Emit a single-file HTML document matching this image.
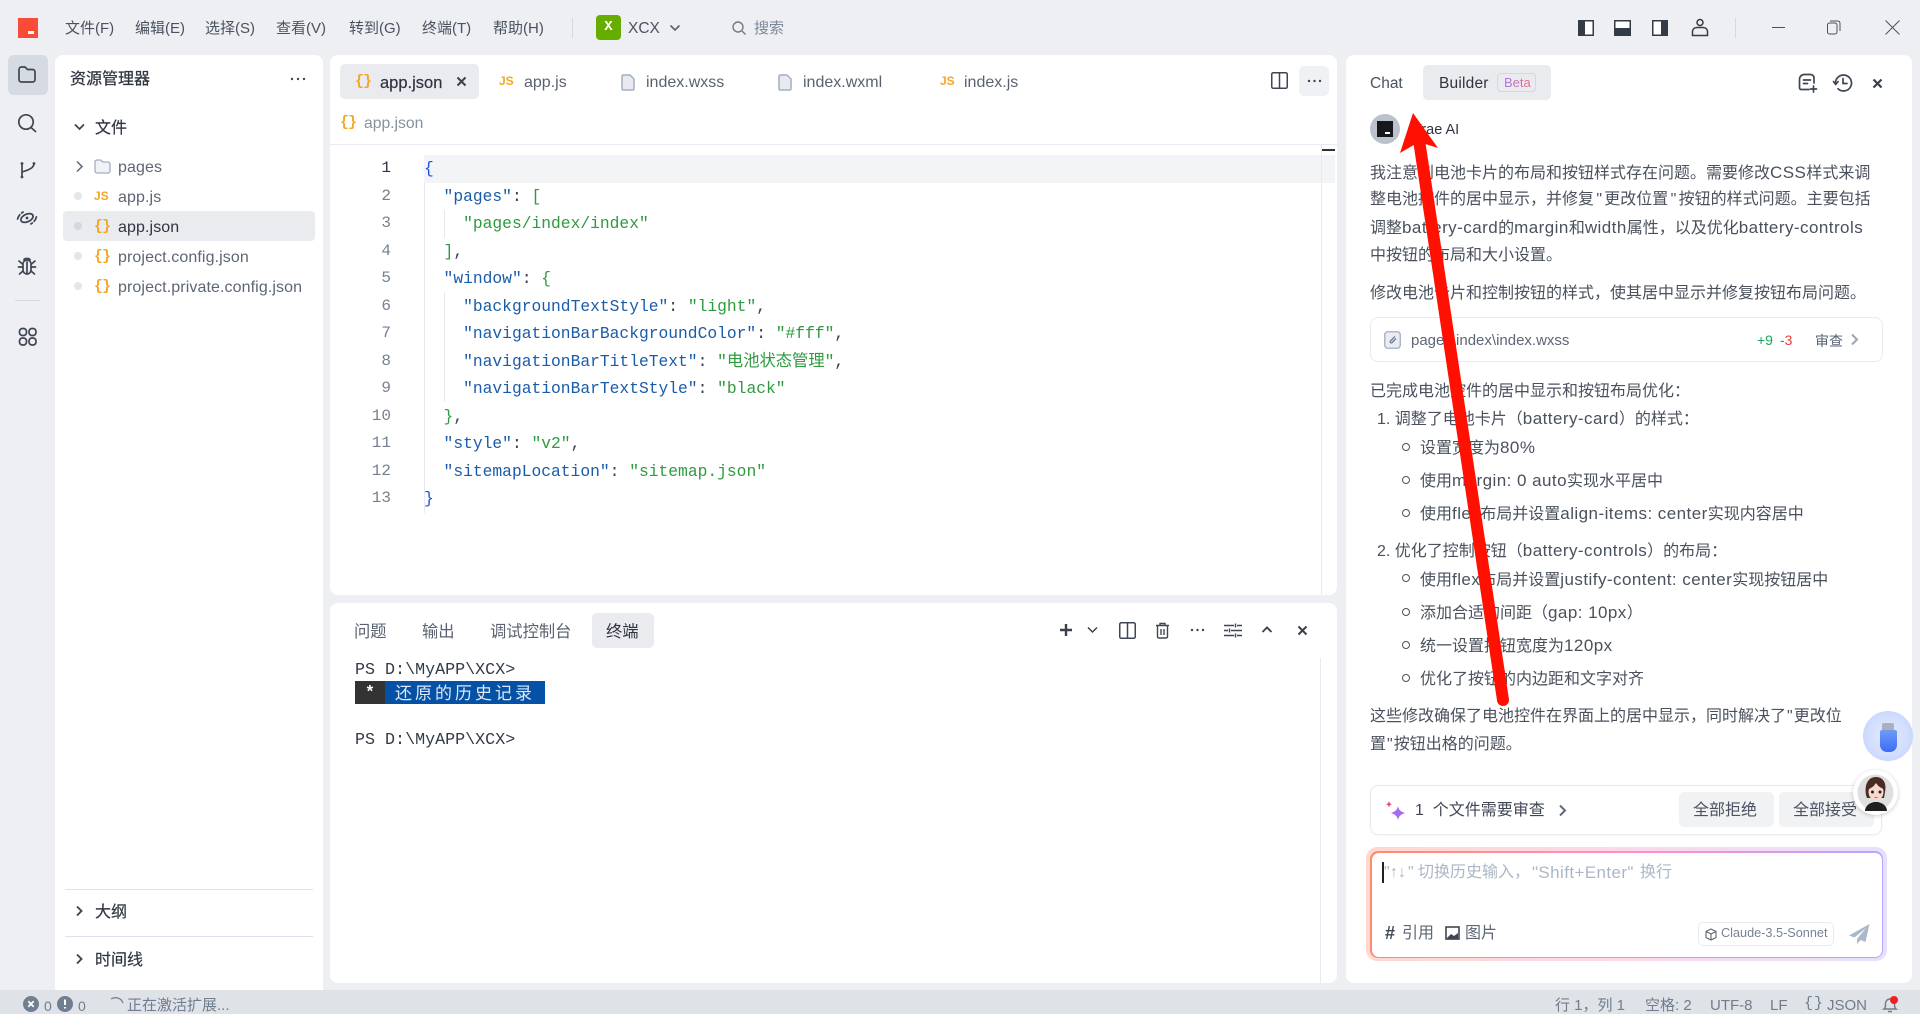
<!DOCTYPE html>
<html lang="zh"><head><meta charset="utf-8"><title>Trae</title>
<style>
html,body{margin:0;padding:0;width:1920px;height:1014px;overflow:hidden;background:#edeff3}
body{position:relative;font-family:"Liberation Sans","Noto Sans CJK SC",sans-serif;color:#3f4653;font-size:15px}
.t{position:absolute;white-space:pre;line-height:20px;height:20px;margin-top:1px}
.b{position:absolute;box-sizing:border-box}
svg{position:absolute;overflow:visible}
.m{top:18px;color:#4a5260;font-size:15px}
.code{position:absolute;left:424px;font:16.3px/27.5px "Liberation Mono","Noto Sans CJK SC",monospace;white-space:pre;height:27.5px;color:#39414d}
.n{position:absolute;left:360px;width:31px;text-align:right;font:16px/27.5px "Liberation Mono",monospace;color:#76818f;height:27.5px}
.k{color:#1b5ca8}.s{color:#2f9a40}.g{color:#2f9a40}.bl{color:#1f4fe0}
.j{position:absolute;font:bold 15px/20px "Liberation Mono",monospace;color:#f5a623;white-space:pre;height:20px;letter-spacing:-1px;margin-top:1px}
.js{position:absolute;font:bold 12px/20px "Liberation Sans",sans-serif;color:#f5a623;height:20px}
.tree{color:#5d6674;font-size:16px;letter-spacing:.1px}
.dot{position:absolute;left:74px;width:8px;height:8px;border-radius:50%;background:#e3e6eb}
.p{color:#4a515d;font-size:16px}
.l{font-size:17px;letter-spacing:.45px}
.q{padding:0 2.300px}
.r{position:absolute;left:1402px;width:6px;height:6px;border:1.5px solid #4a515d;border-radius:50%;box-sizing:content-box;margin-top:-1px}
.st{top:994px;color:#6f7d8e;font-size:15px}
.g2{fill:none;stroke:#3f4653;stroke-width:1.7;stroke-linecap:round;stroke-linejoin:round}
.file{fill:#e7eaf0;stroke:#a3aec2;stroke-width:1.5;stroke-linejoin:round}
.tb{font-size:16px;color:#5a6270;top:72px}
.tm{top:621px;font-size:16.300px;color:#5a6270}
</style></head><body>

<!-- title bar -->
<div class="b" style="left:18px;top:18px;width:20px;height:20px;background:#fa4b38"></div>
<div class="b" style="left:28px;top:31px;width:6px;height:3px;background:#fff"></div>
<div class="t m" style="left:65px">文件(F)</div>
<div class="t m" style="left:135px">编辑(E)</div>
<div class="t m" style="left:205px">选择(S)</div>
<div class="t m" style="left:276px">查看(V)</div>
<div class="t m" style="left:349px">转到(G)</div>
<div class="t m" style="left:422px">终端(T)</div>
<div class="t m" style="left:493px">帮助(H)</div>
<div class="b" style="left:572px;top:18px;width:1px;height:20px;background:#d5d9df"></div>
<div class="b" style="left:596px;top:15px;width:25px;height:25px;border-radius:4px;background:#67ad00;color:#fff;font:bold 14px/25px 'Liberation Mono',monospace;text-align:center">X</div>
<div class="t m" style="left:628px;font-size:15.500px">XCX</div>
<svg style="left:669px;top:23px" width="12" height="10"><path d="M1.5 2.5 6 7l4.500-4.500" fill="none" stroke="#596270" stroke-width="1.600"/></svg>
<svg style="left:731px;top:20px" width="16" height="16"><circle cx="7" cy="7" r="5" fill="none" stroke="#6f7a89" stroke-width="1.400"/><path d="M11 11l3.500 3.500" stroke="#6f7a89" stroke-width="1.400"/></svg>
<div class="t m" style="left:754px;color:#7c8796">搜索</div>
<svg style="left:1578px;top:20px" width="16" height="16"><rect x=".75" y=".75" width="14.500" height="14.500" fill="#fff" stroke="#333b47" stroke-width="1.500"/><rect x="1" y="1" width="6" height="14" fill="#333b47"/></svg>
<svg style="left:1614px;top:20px" width="17" height="16"><rect x=".75" y=".75" width="15.500" height="14.500" fill="#fff" stroke="#333b47" stroke-width="1.500"/><rect x="1" y="8" width="15" height="7" fill="#333b47"/></svg>
<svg style="left:1652px;top:20px" width="16" height="16"><rect x=".75" y=".75" width="14.500" height="14.500" fill="#fff" stroke="#333b47" stroke-width="1.500"/><rect x="9" y="1" width="6" height="14" fill="#333b47"/></svg>
<svg style="left:1691px;top:18px" width="18" height="19"><circle cx="9" cy="4.500" r="3" fill="none" stroke="#333b47" stroke-width="1.500"/><path d="M1.500 17.500v-3.500c0-3 2-4.500 4.500-4.500h6c2.500 0 4.500 1.500 4.500 4.500v3.500z" fill="none" stroke="#333b47" stroke-width="1.500"/></svg>
<div class="b" style="left:1735px;top:18px;width:1px;height:20px;background:#d5d9df"></div>
<div class="b" style="left:1772px;top:27px;width:13px;height:1px;background:#4a5260"></div>
<svg style="left:1827px;top:20px" width="14" height="15"><rect x=".5" y="3" width="9.500" height="11" rx="2" fill="none" stroke="#4a5260"/><path d="M3 1h7.500c1.500 0 2.500 1 2.500 2.500V11" fill="none" stroke="#4a5260"/></svg>
<svg style="left:1885px;top:20px" width="15" height="15"><path d="M.5.500l14 14M14.500.500l-14 14" stroke="#4a5260" stroke-width="1"/></svg>

<!-- activity bar -->
<div class="b" style="left:8px;top:55px;width:40px;height:40px;border-radius:6px;background:#d5dae3"></div>
<svg style="left:18px;top:66px" width="18" height="17"><path d="M1 3.500C1 2 2 1 3.500 1h3.500l2.500 2.500h5C16 3.500 17 4.500 17 6v7.500c0 1.500-1 2.500-2.500 2.500h-11C2 16 1 15 1 13.500z" class="g2"/></svg>
<svg style="left:17px;top:113px" width="20" height="20"><circle cx="9" cy="9" r="7.200" class="g2"/><path d="M14 14.500l4.500 4" class="g2"/></svg>
<svg style="left:19px;top:161px" width="18" height="19"><circle cx="3" cy="2.500" r="1.400" fill="#3f4653"/><circle cx="3" cy="16" r="1.400" fill="#3f4653"/><circle cx="15" cy="2.500" r="1.400" fill="#3f4653"/><path d="M3 2.500v13.500M15 2.500c0 4-4 6-12 8.500" class="g2"/></svg>
<svg style="left:17px;top:208px" width="20" height="20"><g transform="rotate(-25 10 10)"><ellipse cx="10" cy="10" rx="6.500" ry="3.800" class="g2" stroke-width="1.400"/><circle cx="10" cy="10" r="1.400" fill="#3f4653"/><path d="M1 7C3 4.500 6 3 9 3M19 13c-2 2.500-5 4-8 4" class="g2" stroke-dasharray="5 2.500"/></g></svg>
<svg style="left:18px;top:256px" width="18" height="20"><rect x="5" y="4" width="8" height="14" rx="4" class="g2"/><path d="M9 6v12M6 4c0-2 6-2 6 0M1 5l3.500 3M17 5l-3.500 3M.5 11h4M17.500 11h-4M1.500 18l3.500-3M16.500 18L13 15" class="g2"/></svg>
<div class="b" style="left:15px;top:300px;width:25px;height:1px;background:#d5d9e4"></div>
<svg style="left:18px;top:327px" width="19" height="19"><rect x="1.500" y="1.500" width="7" height="7" rx="3" class="g2"/><rect x="11" y="1.500" width="7" height="7" rx="3" class="g2"/><rect x="1.500" y="11" width="7" height="7" rx="3" class="g2"/><rect x="11" y="11" width="7" height="7" rx="3" class="g2"/></svg>

<!-- explorer panel -->
<div class="b" style="left:55px;top:55px;width:268px;height:935px;background:#fff;border-radius:8px 8px 0 0"></div>
<div class="t" style="left:70px;top:69px;font-size:16px;color:#2f3540;-webkit-text-stroke:.25px #2f3540">资源管理器</div>
<svg style="left:290px;top:77px" width="16" height="4"><circle cx="2" cy="2" r="1.200" fill="#3f4653"/><circle cx="8" cy="2" r="1.200" fill="#3f4653"/><circle cx="14" cy="2" r="1.200" fill="#3f4653"/></svg>
<svg style="left:74px;top:122px" width="11" height="10"><path d="M1 2.500l4.500 4.500L10 2.500" fill="none" stroke="#3f4653" stroke-width="1.800"/></svg>
<div class="t" style="left:95px;top:118px;font-size:16px;color:#2f3540;-webkit-text-stroke:.25px #2f3540">文件</div>
<svg style="left:75px;top:160px" width="9" height="13"><path d="M2 1.500l5 5-5 5" fill="none" stroke="#5d6674" stroke-width="1.500"/></svg>
<svg style="left:94px;top:159px" width="17" height="15"><path d="M1 3c0-1 1-2 2-2h3.500L9 3h5c1 0 2 1 2 2v7c0 1-1 2-2 2H3c-1 0-2-1-2-2z" fill="#f0f2f6" stroke="#a3aec2" stroke-width="1.300"/></svg>
<div class="t tree" style="left:118px;top:157px">pages</div>
<div class="dot" style="top:192px"></div>
<div class="js" style="left:94px;top:186px">JS</div>
<div class="t tree" style="left:118px;top:187px">app.js</div>
<div class="b" style="left:63px;top:211px;width:252px;height:30px;background:#e9ebef;border-radius:4px"></div>
<div class="dot" style="top:222px;background:#d3d7df"></div>
<div class="j" style="left:94px;top:216px">{}</div>
<div class="t tree" style="left:118px;top:217px;color:#2f3540">app.json</div>
<div class="dot" style="top:252px"></div>
<div class="j" style="left:94px;top:246px">{}</div>
<div class="t tree" style="left:118px;top:247px">project.config.json</div>
<div class="dot" style="top:282px"></div>
<div class="j" style="left:94px;top:276px">{}</div>
<div class="t tree" style="left:118px;top:277px">project.private.config.json</div>
<div class="b" style="left:65px;top:889px;width:248px;height:1px;background:#dfe2ec"></div>
<div class="b" style="left:65px;top:936px;width:248px;height:1px;background:#dfe2ec"></div>
<svg style="left:75px;top:905px" width="9" height="12"><path d="M2 1.500l4.500 4.500L2 10.500" fill="none" stroke="#3f4653" stroke-width="1.900"/></svg>
<div class="t" style="left:95px;top:902px;font-size:16px;color:#2f3540;-webkit-text-stroke:.2px #2f3540">大纲</div>
<svg style="left:75px;top:953px" width="9" height="12"><path d="M2 1.500l4.500 4.500L2 10.500" fill="none" stroke="#3f4653" stroke-width="1.900"/></svg>
<div class="t" style="left:95px;top:950px;font-size:16px;color:#2f3540;-webkit-text-stroke:.2px #2f3540">时间线</div>

<!-- editor panel -->
<div class="b" style="left:330px;top:55px;width:1007px;height:540px;background:#fff;border-radius:8px"></div>
<div class="b" style="left:340px;top:64px;width:139px;height:35px;background:#e9ebef;border-radius:5px"></div>
<div class="j" style="left:355px;top:71px">{}</div>
<div class="t" style="left:380px;top:72px;font-size:16.500px;color:#2f3540;-webkit-text-stroke:.2px #2f3540">app.json</div>
<svg style="left:456px;top:76px" width="11" height="11"><path d="M1.500 1.500l8 8M9.500 1.500l-8 8" stroke="#3a414d" stroke-width="2"/></svg>
<div class="js" style="left:499px;top:71px">JS</div>
<div class="t tb" style="left:524px">app.js</div>
<svg style="left:621px;top:74px" width="14" height="17"><path d="M1 2.500C1 1.500 1.700 1 2.500 1H9l4 4v9.500c0 1-.7 1.500-1.500 1.500h-9C1.700 16 1 15.500 1 14.500z" class="file"/></svg>
<div class="t tb" style="left:646px">index.wxss</div>
<svg style="left:778px;top:74px" width="14" height="17"><path d="M1 2.500C1 1.500 1.700 1 2.500 1H9l4 4v9.500c0 1-.7 1.500-1.500 1.500h-9C1.700 16 1 15.500 1 14.500z" class="file"/></svg>
<div class="t tb" style="left:803px">index.wxml</div>
<div class="js" style="left:940px;top:71px">JS</div>
<div class="t tb" style="left:964px">index.js</div>
<svg style="left:1271px;top:72px" width="17" height="17"><rect x=".75" y=".75" width="15.500" height="15.500" rx="1.500" fill="none" stroke="#3f4653" stroke-width="1.500"/><path d="M8.500 1v15" stroke="#3f4653" stroke-width="1.500"/></svg>
<div class="b" style="left:1299px;top:66px;width:30px;height:30px;background:#f0f1f4;border-radius:5px"></div>
<svg style="left:1307px;top:79px" width="15" height="4"><circle cx="2" cy="2" r="1.200" fill="#3f4653"/><circle cx="7.500" cy="2" r="1.200" fill="#3f4653"/><circle cx="13" cy="2" r="1.200" fill="#3f4653"/></svg>
<div class="j" style="left:340px;top:112px">{}</div>
<div class="t" style="left:364px;top:113px;color:#87929f;font-size:15.700px">app.json</div>
<div class="b" style="left:330px;top:144px;width:1007px;height:1px;background:#e7eaf2"></div>
<div class="b" style="left:424px;top:155px;width:911px;height:28px;background:#f3f4f6"></div>
<div class="b" style="left:1321px;top:145px;width:1px;height:450px;background:#e7eaf2"></div>
<div class="b" style="left:1322px;top:149px;width:13px;height:2px;background:#333"></div>
<div class="b" style="left:424px;top:183px;width:1px;height:330px;background:#e7e9ee"></div>
<div class="b" style="left:444px;top:210px;width:1px;height:28px;background:#e7e9ee"></div>
<div class="b" style="left:444px;top:292px;width:1px;height:110px;background:#e7e9ee"></div>

<div class="n" style="top:155px;color:#2f3540">1</div><div class="code" style="top:155px"><span class="bl">{</span></div>
<div class="n" style="top:182.500px">2</div><div class="code" style="top:182.500px">  <span class="k">"pages"</span>: <span class="g">[</span></div>
<div class="n" style="top:210px">3</div><div class="code" style="top:210px">    <span class="s">"pages/index/index"</span></div>
<div class="n" style="top:237.500px">4</div><div class="code" style="top:237.500px">  <span class="g">]</span>,</div>
<div class="n" style="top:265px">5</div><div class="code" style="top:265px">  <span class="k">"window"</span>: <span class="g">{</span></div>
<div class="n" style="top:292.500px">6</div><div class="code" style="top:292.500px">    <span class="k">"backgroundTextStyle"</span>: <span class="s">"light"</span>,</div>
<div class="n" style="top:320px">7</div><div class="code" style="top:320px">    <span class="k">"navigationBarBackgroundColor"</span>: <span class="s">"#fff"</span>,</div>
<div class="n" style="top:347.500px">8</div><div class="code" style="top:347.500px">    <span class="k">"navigationBarTitleText"</span>: <span class="s">"电池状态管理"</span>,</div>
<div class="n" style="top:375px">9</div><div class="code" style="top:375px">    <span class="k">"navigationBarTextStyle"</span>: <span class="s">"black"</span></div>
<div class="n" style="top:402.500px">10</div><div class="code" style="top:402.500px">  <span class="g">}</span>,</div>
<div class="n" style="top:430px">11</div><div class="code" style="top:430px">  <span class="k">"style"</span>: <span class="s">"v2"</span>,</div>
<div class="n" style="top:457.500px">12</div><div class="code" style="top:457.500px">  <span class="k">"sitemapLocation"</span>: <span class="s">"sitemap.json"</span></div>
<div class="n" style="top:485px">13</div><div class="code" style="top:485px"><span class="bl">}</span></div>

<!-- terminal panel -->
<div class="b" style="left:330px;top:603px;width:1007px;height:380px;background:#fff;border-radius:8px"></div>
<div class="t tm" style="left:354px">问题</div>
<div class="t tm" style="left:422px">输出</div>
<div class="t tm" style="left:490px">调试控制台</div>
<div class="b" style="left:592px;top:613px;width:62px;height:35px;background:#e9ebef;border-radius:5px"></div>
<div class="t tm" style="left:606px;color:#2f3540">终端</div>
<svg style="left:1059px;top:623px" width="14" height="14"><path d="M7 1v12M1 7h12" stroke="#3a414d" stroke-width="2.400"/></svg>
<svg style="left:1087px;top:626px" width="11" height="8"><path d="M1 1.500l4.500 4.500L10 1.500" fill="none" stroke="#3a414d" stroke-width="1.500"/></svg>
<svg style="left:1119px;top:622px" width="17" height="17"><rect x=".75" y=".75" width="15.500" height="15.500" rx="1.500" fill="none" stroke="#3f4653" stroke-width="1.500"/><path d="M8.500 1v15" stroke="#3f4653" stroke-width="1.500"/></svg>
<svg style="left:1155px;top:622px" width="15" height="17"><path d="M1 3.500h13M5 3.500V1.500h5v2M2.500 3.500v11c0 1 .7 1.500 1.500 1.500h7c.8 0 1.500-.5 1.500-1.500v-11M6 7v6M9 7v6" fill="none" stroke="#3f4653" stroke-width="1.400"/></svg>
<svg style="left:1190px;top:628px" width="15" height="4"><circle cx="2" cy="2" r="1.200" fill="#3f4653"/><circle cx="7.500" cy="2" r="1.200" fill="#3f4653"/><circle cx="13" cy="2" r="1.200" fill="#3f4653"/></svg>
<svg style="left:1224px;top:622px" width="18" height="17"><path d="M0 3.500h10M13 3.500h5M0 8.500h4M7 8.500h11M0 13.500h10M13 13.500h5M11.500 1.500v4M5.500 6.500v4M11.500 11.500v4" fill="none" stroke="#3f4653" stroke-width="1.400"/></svg>
<svg style="left:1261px;top:625px" width="12" height="9"><path d="M1.500 7L6 2.500 10.500 7" fill="none" stroke="#3f4653" stroke-width="1.900"/></svg>
<svg style="left:1297px;top:625px" width="11" height="11"><path d="M1.500 1.500l8 8M9.500 1.500l-8 8" stroke="#3a414d" stroke-width="2"/></svg>
<div class="t" style="left:355px;top:660px;font:16.700px/20px 'Liberation Mono',monospace;color:#333b47">PS D:\MyAPP\XCX&gt;</div>
<div class="b" style="left:355px;top:681px;width:30px;height:23px;background:#333"></div>
<div class="b" style="left:385px;top:681px;width:160px;height:23px;background:#0451a5"></div>
<div class="t" style="left:365px;top:682px;font:bold 16.500px/20px 'Liberation Mono',monospace;color:#fff">*</div>
<div class="t" style="left:395px;top:681px;font-size:17px;letter-spacing:3px;color:#dfe7f3;font-family:'Noto Sans CJK SC',sans-serif">还原的历史记录</div>
<div class="t" style="left:355px;top:730px;font:16.700px/20px 'Liberation Mono',monospace;color:#333b47">PS D:\MyAPP\XCX&gt;</div>
<div class="b" style="left:1320px;top:658px;width:1px;height:325px;background:#e7eaf2"></div>

<!-- right panel -->
<div class="b" style="left:1346px;top:55px;width:566px;height:928px;background:#fff;border-radius:8px"></div>
<div class="t" style="left:1370px;top:73px;color:#4a5260;font-size:15.500px">Chat</div>
<div class="b" style="left:1423px;top:65px;width:128px;height:35px;background:#e9ebef;border-radius:5px"></div>
<div class="t" style="left:1439px;top:73px;color:#2f3540;font-size:15.500px;letter-spacing:.2px">Builder</div>
<div class="b" style="left:1497px;top:73px;width:39px;height:19px;border:1px solid #d3d7e0;border-radius:4px"></div>
<div class="t" style="left:1504px;top:72px;font-size:13px;background:linear-gradient(90deg,#a777ec,#f06a7f);-webkit-background-clip:text;background-clip:text;color:transparent">Beta</div>
<svg style="left:1798px;top:73px" width="20" height="20"><path d="M16 10V5c0-2-1.500-3.500-3.500-3.500h-6C3.500 1.500 1.500 3.500 1.500 6.500v8c0 1 .5 2 1.500 2h8M5.500 7h7M5.500 10.500h4M15.500 13v6M12.500 16h6" class="g2" stroke-width="1.500"/></svg>
<svg style="left:1833px;top:73px" width="20" height="20"><path d="M2.500 10A8 8 0 1 1 5 15.800M10 5.500V10.500h4" class="g2" stroke-width="1.500"/><path d="M.5 8.500l2.200 3 2.400-3" class="g2" stroke-width="1.500"/></svg>
<svg style="left:1872px;top:78px" width="11" height="11"><path d="M1.500 1.500l8 8M9.500 1.500l-8 8" stroke="#3a414d" stroke-width="2.200"/></svg>
<div class="b" style="left:1370px;top:114px;width:30px;height:30px;border-radius:50%;background:#bcc2cd"></div>
<div class="b" style="left:1377px;top:121px;width:16px;height:16px;background:#16181c"></div>
<div class="b" style="left:1385px;top:132px;width:5px;height:2px;background:#fff"></div>
<div class="t" style="left:1413px;top:119px;color:#2f3540;font-size:14.500px">Trae AI</div>
<div class="t p" style="left:1370px;top:162px">我注意到电池卡片的布局和按钮样式存在问题。需要修改<span class="l">CSS</span>样式来调</div>
<div class="t p" style="left:1370px;top:189px">整电池控件的居中显示，并修复<span class="q">"</span>更改位置<span class="q">"</span>按钮的样式问题。主要包括</div>
<div class="t p" style="left:1370px;top:217px">调整<span class="l">battery-card</span>的<span class="l">margin</span>和<span class="l">width</span>属性，以及优化<span class="l">battery-controls</span></div>
<div class="t p" style="left:1370px;top:245px">中按钮的布局和大小设置。</div>
<div class="t p" style="left:1370px;top:283px">修改电池卡片和控制按钮的样式，使其居中显示并修复按钮布局问题。</div>
<div class="b" style="left:1370px;top:317px;width:513px;height:45px;border:1px solid #e7eaf0;border-radius:8px"></div>
<svg style="left:1384px;top:331px" width="17" height="18"><rect x=".75" y=".75" width="15.500" height="16.500" rx="3" fill="#e9ecf2" stroke="#a3aec2" stroke-width="1.300"/><path d="M11 5.500L6.500 10c-1 1.200.5 2.500 1.700 1.500L12 7.500" fill="none" stroke="#6f7d8e" stroke-width="1.300"/></svg>
<div class="t" style="left:1411px;top:330px;font-size:15px;color:#5d6674">pages\index\index.wxss</div>
<div class="t" style="left:1757px;top:329px;font-size:14px;color:#17a65a">+9</div>
<div class="t" style="left:1780px;top:329px;font-size:14px;color:#ef3b3b">-3</div>
<div class="t" style="left:1815px;top:330px;font-size:14px;color:#5a6270">审查</div>
<svg style="left:1850px;top:333px" width="9" height="13"><path d="M2 1.500l5 5-5 5" fill="none" stroke="#9aa6b5" stroke-width="2"/></svg>
<div class="t p" style="left:1370px;top:381px">已完成电池控件的居中显示和按钮布局优化：</div>
<div class="t p" style="left:1377px;top:408px">1. 调整了电池卡片（<span class="l">battery-card</span>）的样式：</div>
<div class="r" style="top:444px"></div><div class="t p" style="left:1420px;top:437px">设置宽度为<span class="l">80%</span></div>
<div class="r" style="top:477px"></div><div class="t p" style="left:1420px;top:470px">使用<span class="l">margin: 0 auto</span>实现水平居中</div>
<div class="r" style="top:510px"></div><div class="t p" style="left:1420px;top:503px">使用<span class="l">flex</span>布局并设置<span class="l">align-items: center</span>实现内容居中</div>
<div class="t p" style="left:1377px;top:540px">2. 优化了控制按钮（<span class="l">battery-controls</span>）的布局：</div>
<div class="r" style="top:575px"></div><div class="t p" style="left:1420px;top:569px">使用<span class="l">flex</span>布局并设置<span class="l">justify-content: center</span>实现按钮居中</div>
<div class="r" style="top:609px"></div><div class="t p" style="left:1420px;top:602px">添加合适的间距（<span class="l">gap: 10px</span>）</div>
<div class="r" style="top:642px"></div><div class="t p" style="left:1420px;top:635px">统一设置按钮宽度为<span class="l">120px</span></div>
<div class="r" style="top:675px"></div><div class="t p" style="left:1420px;top:669px">优化了按钮的内边距和文字对齐</div>
<div class="t p" style="left:1370px;top:706px">这些修改确保了电池控件在界面上的居中显示，同时解决了<span class="q" style="padding:0 1px">"</span>更改位</div>
<div class="t p" style="left:1370px;top:734px">置<span class="q" style="padding:0 1px">"</span>按钮出格的问题。</div>

<div class="b" style="left:1370px;top:785px;width:512px;height:50px;border:1px solid #e7eaf0;border-radius:8px;box-shadow:0 1px 3px rgba(0,0,0,.03)"></div>
<svg style="left:1385px;top:801px" width="22" height="22"><path d="M13 5c1 4 2.500 5.500 7 7-4.500 1.500-6 3-7 7-1-4-2.500-5.500-7-7 4.500-1.500 6-3 7-7z" fill="#a66bf0"/><path d="M4 0c.5 2 1.200 2.700 3 3.300-1.800.6-2.500 1.300-3 3.300-.5-2-1.200-2.700-3-3.300C2.800 2.700 3.500 2 4 0z" fill="#f3476f"/></svg>
<div class="t" style="left:1415px;top:800px;font-size:16px;color:#3f4653">1  个文件需要审查</div>
<svg style="left:1558px;top:804px" width="9" height="13"><path d="M2 1.500l5 5-5 5" fill="none" stroke="#5d6a7c" stroke-width="2"/></svg>
<div class="b" style="left:1679px;top:792px;width:95px;height:35px;background:#f1f2f4;border-radius:5px"></div>
<div class="t" style="left:1693px;top:800px;color:#4a5260;font-size:16px">全部拒绝</div>
<div class="b" style="left:1779px;top:792px;width:95px;height:35px;background:#f1f2f4;border-radius:5px"></div>
<div class="t" style="left:1793px;top:800px;color:#4a5260;font-size:16px">全部接受</div>

<div class="b" style="left:1366px;top:847px;width:521px;height:114px;border-radius:11px;background:linear-gradient(90deg,#ffd9cf,#fbd8ec 55%,#e6e0fd)"></div>
<div class="b" style="left:1370px;top:851px;width:513px;height:107px;border-radius:8px;background:linear-gradient(90deg,#ff8a6e 0%,#ff8fc8 50%,#b9a6fb 100%)"></div>
<div class="b" style="left:1371.500px;top:852.500px;width:510px;height:104px;border-radius:7px;background:#fff"></div>
<div class="b" style="left:1382px;top:862px;width:2px;height:21px;background:#222"></div>
<div class="t" style="left:1384px;top:862px;color:#aab7c6;font-size:16px">"</div>
<div class="t" style="left:1390px;top:862px;color:#aab7c6;font-size:16px;font-weight:bold">↑↓</div>
<div class="t" style="left:1408px;top:862px;color:#aab7c6;font-size:16px">"</div>
<div class="t" style="left:1418px;top:862px;color:#aab7c6;font-size:16px">切换历史输入，</div>
<div class="t" style="left:1532px;top:862px;color:#aab7c6;font-size:17px;letter-spacing:.4px">"Shift+Enter"</div>
<div class="t" style="left:1640px;top:862px;color:#aab7c6;font-size:16px">换行</div>
<div class="t" style="left:1385px;top:922px;font-size:18px;font-weight:bold;color:#3f4653">#</div>
<div class="t" style="left:1402px;top:923px;color:#5d6674;font-size:16px">引用</div>
<svg style="left:1445px;top:926px" width="15" height="14"><rect x="1" y="1" width="13" height="12" fill="#fff" stroke="#3f4653" stroke-width="1.600"/><path d="M2 12l4-4 3 2 4-3v5.500H2z" fill="#3f4653"/></svg>
<div class="t" style="left:1465px;top:923px;color:#5d6674;font-size:16px">图片</div>
<div class="b" style="left:1698px;top:922px;width:136px;height:24px;border:1px solid #e7eaf0;border-radius:5px"></div>
<svg style="left:1705px;top:928px" width="12" height="13"><path d="M6 1l5 2.500v6L6 12 1 9.500v-6zM1 3.500L6 6l5-2.500M6 6v6" fill="none" stroke="#5d6674" stroke-width="1.100"/></svg>
<div class="t" style="left:1721px;top:922px;font-size:12.700px;color:#768395">Claude-3.5-Sonnet</div>
<svg style="left:1849px;top:924px" width="21" height="20"><path d="M20.500 0L0 11.500l5.500 2L17 4 8 15v5l3.500-4 5 2z" fill="#a9b9c9"/></svg>

<div class="b" style="left:1863px;top:711px;width:50px;height:50px;border-radius:50%;background:radial-gradient(circle at 50% 50%,#e4ebff 0,#d3defe 55%,#c9d7fe 72%,#dbe5ff 100%)"></div>
<div class="b" style="left:1882px;top:723px;width:12px;height:8px;background:#aab1bd;border-radius:2px 2px 0 0"></div>
<div class="b" style="left:1880px;top:730px;width:17px;height:22px;background:linear-gradient(180deg,#6f9bf5,#3d6cf5);border-radius:2px 2px 7px 7px"></div>
<div class="b" style="left:1853px;top:770px;width:45px;height:45px;border-radius:50%;background:#fff;box-shadow:0 1px 4px rgba(0,0,0,.2)"></div>
<svg style="left:1857px;top:774px" width="37" height="37"><circle cx="18.500" cy="18.500" r="18" fill="#dfdfdf"/><path d="M9 21C7 8 13 3 19 3c7 0 11 6 9 15l-1 6H10z" fill="#4a2c24"/><ellipse cx="19" cy="18" rx="7.500" ry="8.500" fill="#f8d8cd"/><path d="M12 15c2-1 6-3 7-7 1 4 5 6 8 7 0-6-3-10-8-10s-7 4-7 10z" fill="#4a2c24"/><path d="M8 37c0-5 5-9 11-9s11 4 11 9z" fill="#1f1f22"/><circle cx="15.500" cy="18" r="1.500" fill="#222"/><circle cx="23" cy="18" r="1.500" fill="#222"/><path d="M17.500 23.500h3" stroke="#d66" stroke-width="1.200"/></svg>

<!-- status bar -->
<div class="b" style="left:0;top:990px;width:1920px;height:24px;background:#dfe2e7"></div>
<svg style="left:23px;top:996px" width="16" height="16"><circle cx="8" cy="8" r="8" fill="#6f7f91"/><path d="M5.300 5.300l5.400 5.400M10.700 5.300l-5.400 5.400" stroke="#fff" stroke-width="1.800"/></svg>
<div class="t st" style="left:44px;top:995px;font-size:14px">0</div>
<svg style="left:57px;top:996px" width="16" height="16"><circle cx="8" cy="8" r="8" fill="#6f7f91"/><path d="M8 3.500v5.500M8 11v1.500" stroke="#fff" stroke-width="2"/></svg>
<div class="t st" style="left:78px;top:995px;font-size:14px">0</div>
<svg style="left:110px;top:997px" width="14" height="14"><path d="M1 2C5-.5 11 .500 13 6" fill="none" stroke="#76838f" stroke-width="1.300"/></svg>
<div class="t st" style="left:127px;top:995px">正在激活扩展...</div>
<div class="t st" style="left:1555px;top:995px">行 1，列 1</div>
<div class="t st" style="left:1645px;top:995px">空格: 2</div>
<div class="t st" style="left:1710px;top:995px">UTF-8</div>
<div class="t st" style="left:1770px;top:995px">LF</div>
<div class="t st" style="left:1804px;top:993px;font:15px/20px 'Liberation Mono',monospace;letter-spacing:1px">{}</div>
<div class="t st" style="left:1827px;top:995px">JSON</div>
<svg style="left:1881px;top:996px" width="18" height="18"><path d="M3 13c1.500-1 1.500-2.500 1.500-5 0-3 2-5 4.500-5s4.500 2 4.500 5c0 2.500 0 4 1.500 5zM7 15.500h4" fill="none" stroke="#6f7d8e" stroke-width="1.400"/></svg>
<div class="b" style="left:1890px;top:996px;width:8px;height:8px;border-radius:50%;background:#ee2020"></div>

<!-- red annotation arrow -->
<svg style="left:0;top:0" width="1920" height="1014"><path d="M1419 140L1503 700" stroke="#ff1000" stroke-width="12" stroke-linecap="round" fill="none"/><path d="M1413 113L1400 153L1419 142L1438 148z" fill="#ff1000"/></svg>
</body></html>
